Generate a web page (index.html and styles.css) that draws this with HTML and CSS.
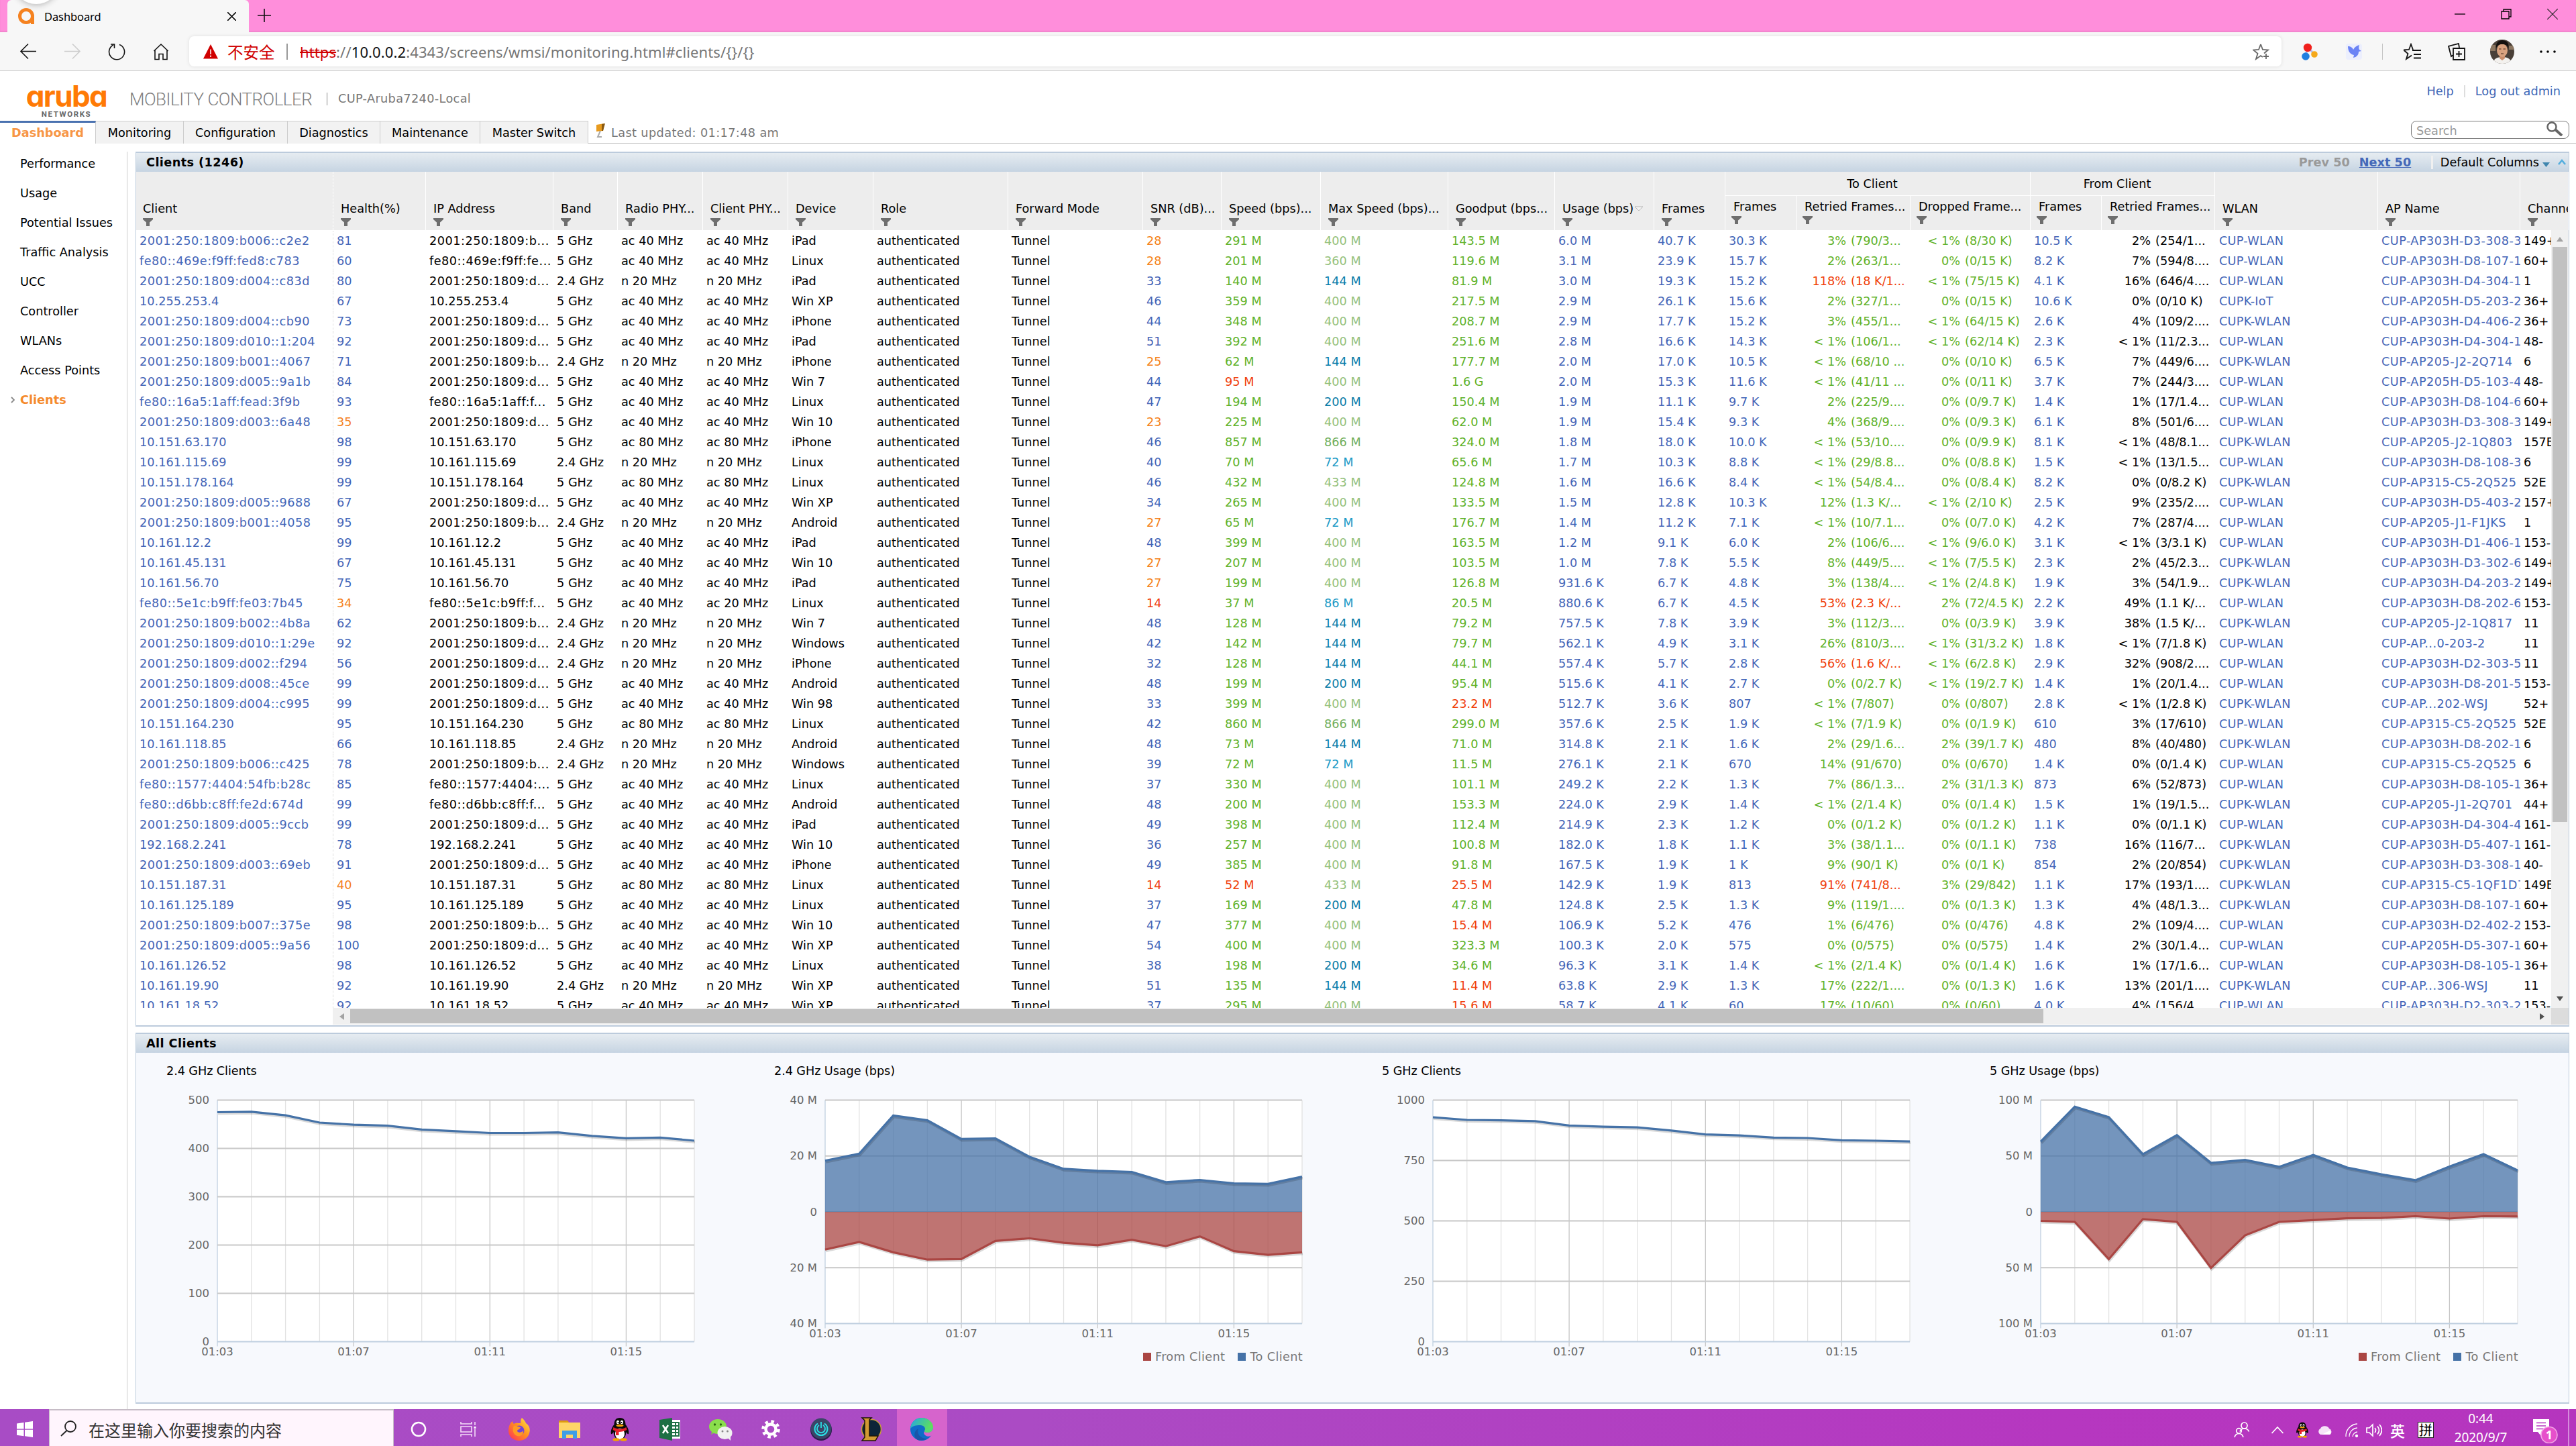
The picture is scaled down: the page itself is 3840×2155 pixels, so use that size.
FILE: index.html
```html
<!DOCTYPE html>
<html lang="en">
<head>
<meta charset="utf-8">
<title>Dashboard</title>
<link rel="stylesheet" href="styles.css">
</head>
<body>
<svg class="defs" width="0" height="0">
  <symbol id="funnel" viewBox="0 0 15 12"><path d="M0 0h15v2l-5 4.500v5.500h-5v-5.500l-5-4.500z" fill="#6e6e6e"/></symbol>
  <symbol id="penguin" viewBox="0 0 30 36">
    <path d="M15 1c6 0 8.500 4 8.500 10 4 5 5.500 10 4.500 14-1 1-2.500-1-3.500-3-.5 8-4 11-9.500 11s-9-3-9.500-11c-1 2-2.500 4-3.500 3-1-4 .5-9 4.500-14C6.500 5 9 1 15 1z" fill="#0b0b0b"/>
    <ellipse cx="15" cy="25" rx="7" ry="8" fill="#fff"/><ellipse cx="12" cy="7.500" rx="2" ry="2.800" fill="#fff"/><ellipse cx="18" cy="7.500" rx="2" ry="2.800" fill="#fff"/>
    <circle cx="12.500" cy="8" r="1" /><circle cx="17.500" cy="8" r="1"/>
    <ellipse cx="15" cy="12.500" rx="5.500" ry="1.800" fill="#f5a300"/>
    <path d="M5.500 15c6 3.500 13 3.500 19 0l1 4c-4 2-8 3-12 3v5H9v-6l-4.500-2z" fill="#e6212a"/>
    <ellipse cx="9.500" cy="33.500" rx="5" ry="2.200" fill="#f5a300"/><ellipse cx="20.500" cy="33.500" rx="5" ry="2.200" fill="#f5a300"/>
  </symbol>
</svg>
<div class="window">
  <div class="tabstrip">
    <div class="btab">
      <svg class="favicon" viewBox="0 0 24 24"><circle cx="12" cy="12" r="9.500" fill="none" stroke="#f58220" stroke-width="5"/><path d="M21.500 12v12" stroke="#f58220" stroke-width="5"/></svg>
      <span class="btab-title">Dashboard</span>
      <svg class="btab-x" viewBox="0 0 12 12"><path d="M0 0l12 12M12 0L0 12" stroke="#111" stroke-width="1.500"/></svg>
      <div class="bubble"></div>
    </div>
    <svg class="newtab" viewBox="0 0 20 20"><path d="M10 0v20M0 10h20" stroke="#111" stroke-width="1.600"/></svg>
    <div class="winctl">
      <svg viewBox="0 0 16 16"><path d="M0 8h16" stroke="#000" stroke-width="1.300"/></svg>
      <svg viewBox="0 0 16 16"><path d="M1 4h11v11h-11zM4 4v-3h11v11h-3" fill="none" stroke="#000" stroke-width="1.300"/></svg>
      <svg viewBox="0 0 16 16"><path d="M0 0l16 16M16 0l-16 16" stroke="#222" stroke-width="1.200"/></svg>
    </div>
  </div>
  <div class="toolbar">
    <div class="nav">
      <svg viewBox="0 0 26 26"><path d="M13 1.500L2 12.500l11 11M2 12.500h23" fill="none" stroke="#111" stroke-width="1.600"/></svg>
      <svg viewBox="0 0 26 26"><path d="M13 1.500l11 11-11 11M24 12.500H1" fill="none" stroke="#ccc" stroke-width="1.600"/></svg>
      <svg viewBox="0 0 26 26"><path d="M8 3A11.500 11.500 0 1 0 17 2.500M4 2h5.500v6" fill="none" stroke="#111" stroke-width="1.600"/></svg>
      <svg viewBox="0 0 26 26"><path d="M2.500 12L13 2l10.500 10M4 11v13.500h6v-8h6v8h6V11" fill="none" stroke="#111" stroke-width="1.600"/></svg>
    </div>
    <div class="urlbar">
      <svg class="warn" viewBox="0 0 22 22"><path d="M11 0l11 21.500H0z" fill="#d00000"/><path d="M11 7.500v7.500M11 16.500v2.500" stroke="#fff" stroke-width="1.500"/></svg>
      <span class="unsafe">不安全</span><i class="usep"></i>
      <span class="url"><s>https</s>://<b>10.0.0.2</b>:4343/screens/wmsi/monitoring.html#clients/{}/{}</span>
      <svg class="star" viewBox="0 0 26 26"><path d="M12 2l3 8 8 .5-6 5M12 2L9 10l-8 .5 6.500 5.200L5 24l7-5 3 2M20 16v8M16 20h8" fill="none" stroke="#666" stroke-width="1.800"/></svg>
    </div>
    <div class="ext">
      <svg viewBox="0 0 26 26"><path d="M10 6L7 19M10 6l9 10" stroke="#b7b9e8" stroke-width="3"/><circle cx="10" cy="7" r="6.200" fill="#f0201c"/><circle cx="7" cy="20" r="5.800" fill="#1f7fe0"/><circle cx="20" cy="17" r="4.800" fill="#f5a91b"/></svg>
      <svg viewBox="0 0 26 26"><rect x="1" y="1" width="24" height="24" rx="4" fill="#eceffd"/><path d="M4 5c4 0 7 2 8 5 2-4 5-6 9-7-1 3-1 5 0 7l3 2-4 1c0 5-3 8-8 9l1-4C7 17 4 12 4 5z" fill="#6b83f5"/></svg>
    </div>
    <i class="tsep"></i>
    <div class="ext ext2">
      <svg viewBox="0 0 26 26"><path d="M14 10L11 2 8 10l-8 .5L6.500 16 4 24l8-5.500M13 11h13M15 17h11M15 22.500h11" fill="none" stroke="#111" stroke-width="1.800"/></svg>
      <svg viewBox="0 0 26 26"><path d="M8 8h17v17H8zM8 18L5 20 1 5l15-4 1 6M16.500 12v9M12 16.500h9" fill="none" stroke="#111" stroke-width="1.800"/></svg>
      <svg class="avatar" viewBox="0 0 36 36"><defs><clipPath id="av"><circle cx="18" cy="18" r="18"/></clipPath></defs><g clip-path="url(#av)"><path d="M0 0h36v36H0z" fill="#4a4038"/><path d="M0 8h8v9H0zM28 9h8v6h-8z" fill="#8b7660"/><path d="M4 36c1-8 7-10 14-10s13 2 14 10z" fill="#f3f1ee"/><path d="M14 23h8v5l-4 3-4-3z" fill="#c98d6b"/><ellipse cx="18" cy="16" rx="8" ry="10" fill="#d9a27f"/><path d="M9 14C8 5 12 1 18 1s11 3 9 13c-1-5-3-7-9-7s-8 2-9 7z" fill="#15110f"/><path d="M13 14h3.500M19.500 14h3.500M16 21h4" stroke="#47291d" stroke-width="1.100"/></g></svg>
      <svg viewBox="0 0 26 26"><circle cx="3" cy="13" r="1.800"/><circle cx="13" cy="13" r="1.800"/><circle cx="23" cy="13" r="1.800"/></svg>
    </div>
  </div>

  <div class="page">
    <div class="masthead">
      <div class="logo"><span class="logo-name">aruba</span><span class="logo-sub">NETWORKS</span></div>
      <span class="product">MOBILITY CONTROLLER</span>
      <i class="msep"></i>
      <span class="host">CUP-Aruba7240-Local</span>
      <div class="account"><a>Help</a><i></i><a>Log out admin</a></div>
    </div>
    <div class="menu">
      <span class="mtab on">Dashboard</span><span class="mtab t2">Monitoring</span><span class="mtab t3">Configuration</span><span class="mtab t4">Diagnostics</span><span class="mtab t5">Maintenance</span><span class="mtab t6">Master Switch</span>
      <div class="menu-rest">
        <svg class="pin" viewBox="0 0 16 21"><path d="M2 2l12-2-2 11-10 1z" fill="#e89b1e"/><path d="M10 1l5-1-3 11-2 0z" fill="#8a5a12"/><path d="M8 11l-4 9h6" fill="none" stroke="#aaa" stroke-width="2"/></svg>
        <span class="updated">Last updated: 01:17:48 am</span>
        <div class="search"><span>Search</span><svg viewBox="0 0 24 22"><circle cx="8" cy="8" r="6.500" fill="none" stroke="#666" stroke-width="2.500"/><path d="M13 12l10 9" stroke="#666" stroke-width="4"/></svg></div>
      </div>
    </div>
    <div class="content">
      <div class="side">
        <span>Performance</span><span>Usage</span><span>Potential Issues</span><span>Traffic Analysis</span><span>UCC</span><span>Controller</span><span>WLANs</span><span>Access Points</span>
        <span class="cur"><svg viewBox="0 0 6 10"><path d="M1 1l4 4-4 4" fill="none" stroke="#888" stroke-width="1.800"/></svg>Clients</span>
      </div>
      <div class="main">
        <div class="panel clients">
          <div class="phead"><b>Clients (1246)</b>
            <div class="pager"><b class="prev">Prev 50</b><b class="next">Next 50</b><i></i><span>Default Columns</span>
              <svg class="tri" viewBox="0 0 11 7"><path d="M0 0h11L5.500 7z" fill="#3f86ae"/></svg>
              <svg class="up" viewBox="0 0 12 10"><path d="M1 8l5-6 5 6" fill="none" stroke="#55aede" stroke-width="2.600"/></svg></div>
          </div>
          <div class="thead cols" id="thead"></div>
          <div class="tbody"><div class="rows" id="rows"></div>
            <div class="vscroll"><svg viewBox="0 0 10 7"><path d="M0 7h10L5 0z" fill="#a3a3a3"/></svg><div class="vthumb"></div><svg class="down" viewBox="0 0 10 7"><path d="M0 0h10L5 7z" fill="#505050"/></svg></div>
          </div>
          <div class="hrow"><div class="hscroll"><svg viewBox="0 0 7 10"><path d="M7 0v10L0 5z" fill="#a3a3a3"/></svg><div class="hthumb"></div><svg class="right" viewBox="0 0 7 10"><path d="M0 0v10l7-5z" fill="#505050"/></svg></div><div class="corner"></div></div>
        </div>
        <div class="panel all">
          <div class="phead"><b>All Clients</b></div>
          <div class="charts" id="charts"></div>
        </div>
      </div>
    </div>
  </div>

  <div class="taskbar">
    <div class="start"><svg viewBox="0 0 24 24"><path d="M0 3.500l10.500-1.500v9.500H0zM12 1.700L24 0v11.500H12zM0 12.700h10.500v9.500L0 20.700zM12 12.700h12V24l-12-1.700z" fill="#fff"/></svg></div>
    <div class="tsearch"><svg viewBox="0 0 26 24"><circle cx="16" cy="9" r="8" fill="none" stroke="#222" stroke-width="1.800"/><path d="M10.500 15L2 23" stroke="#222" stroke-width="1.800"/></svg><span>在这里输入你要搜索的内容</span></div>
    <div class="apps">
      <div><svg viewBox="0 0 36 36"><circle cx="18" cy="18" r="10" fill="none" stroke="#fff" stroke-width="2.600"/></svg></div>
      <div><svg viewBox="0 0 36 36"><path d="M6 7v3h16V7M6 29v-3h16v3M6 14h16v8H6zM27 7v5M27 18v11" fill="none" stroke="#f3dcf7" stroke-width="1.600"/><path d="M25.500 14h3v3h-3z" fill="#fff"/></svg></div>
      <div><svg viewBox="0 0 36 36"><defs><linearGradient id="ff" x1="1" y1="0" x2="0" y2="1"><stop offset="0" stop-color="#fff04a"/><stop offset=".45" stop-color="#ff9220"/><stop offset="1" stop-color="#ff2d5a"/></linearGradient></defs><path d="M22 1c3 3 5 5 6 8 5 3 7 9 5 15-2 7-8 11-15 11C9 35 2 29 2 20c0-6 2-11 6-14 0 2 1 3 2 4 3-2 7-1 10-1 0-3 0-6 2-8z" fill="url(#ff)"/><circle cx="18" cy="20" r="7.500" fill="#7246d8"/><path d="M10 13c4-1 6 2 10 2-1 4-5 3-5 6 2 3 7 2 9-1 1 7-5 9-9 8-6-2-8-9-5-15z" fill="#ff9a24"/></svg></div>
      <div><svg viewBox="0 0 36 36"><path d="M2 5h13l3 4H2z" fill="#dd9b10"/><path d="M2 8h32v23H2z" fill="#ffd566"/><path d="M7 20h22v12h-6v-6H13v6H7z" fill="#3f9ee6"/></svg></div>
      <div><svg viewBox="0 0 30 36"><use href="#penguin"/></svg></div>
      <div><svg viewBox="0 0 36 36"><path d="M16 4h17v28H16z" fill="#fff"/><path d="M20 8h11v20H20M20 13h11M20 18h11M20 23h11M26 8v20" fill="none" stroke="#1d7044" stroke-width="2"/><path d="M2 4l19-3v34L2 31z" fill="#1d7044"/><path d="M7 12l8 12M15 12L7 24" stroke="#fff" stroke-width="2.600"/></svg></div>
      <div><svg viewBox="0 0 36 36"><path d="M6 19l-2 7 6-4z" fill="#7fd63e"/><ellipse cx="14" cy="14" rx="13" ry="11" fill="#8ade4c"/><circle cx="9.500" cy="11" r="1.700" fill="#2c6a12"/><circle cx="18.500" cy="11" r="1.700" fill="#2c6a12"/><ellipse cx="24.500" cy="23.500" rx="11" ry="9.500" fill="#f1f1f1"/><path d="M28 30l5 5v-7z" fill="#f1f1f1"/><circle cx="21" cy="21" r="1.500" fill="#888"/><circle cx="28.500" cy="21" r="1.500" fill="#888"/></svg></div>
      <div><svg viewBox="0 0 36 36"><circle cx="18" cy="18" r="7.500" fill="none" stroke="#fff" stroke-width="4.500"/><circle cx="18" cy="18" r="11.500" fill="none" stroke="#fff" stroke-width="4.500" stroke-dasharray="4.500 4.531"/></svg></div>
      <div><svg viewBox="0 0 36 36"><circle cx="18" cy="19" r="16" fill="#2a1c4b"/><circle cx="18" cy="17" r="15.500" fill="#3a4668"/><path d="M13 9.500a9.500 9.500 0 1 0 10 0" fill="none" stroke="#2ae0e6" stroke-width="2"/><path d="M15 12a6 6 0 1 0 6 0M18 7v9" fill="none" stroke="#2ae0e6" stroke-width="1.800"/></svg></div>
      <div><svg viewBox="0 0 36 36"><circle cx="19" cy="18" r="14.500" fill="#0d2438" stroke="#c89b3c" stroke-width="1.600"/><path d="M5 1h14l-3 3v24h13l-4 7H5l4-5V5z" fill="#d19a33" stroke="#1e1408" stroke-width="1.500"/></svg></div>
      <div class="active"><svg viewBox="0 0 36 36"><defs><linearGradient id="eg" x1="0" y1="0" x2="1" y2=".4"><stop offset="0" stop-color="#22a6e8"/><stop offset="1" stop-color="#5fe05a"/></linearGradient></defs><circle cx="18" cy="18" r="17" fill="#0f6cc8"/><path d="M1 17C2 7 9 1 18 1c10 0 17 7 17 14 0 5-4 8-8 8-3 0-5-1-5-2 3-5-1-9-6-9C9 12 4 13 1 17z" fill="url(#eg)"/><path d="M35 15c0 5-4 8-8 8-3 0-5-1-5-2l-1 3c2 5 8 6 12 3l3 3V15z" fill="#d664cc"/><path d="M35 15c0 5-4 8-8 8-3 0-5-1-5-2 1-4 13-6 13-6z" fill="#58d874"/><path d="M13 17c-3 7 2 15 13 15-5 3-11 3-14 2C6 31 5 21 13 17z" fill="#1a55a8"/></svg></div>
    </div>
    <div class="tray">
      <div class="c1"><svg viewBox="0 0 24 24"><circle cx="15.500" cy="5.500" r="4.500"/><path d="M9 14.500c1-3 3-4.500 6.500-4.500s6 2 7 4.500"/><circle cx="7.500" cy="13.500" r="3.800"/><path d="M1 23c1-4 3-5.500 6.500-5.500S13 19 14 23"/></svg></div>
      <div class="c2"><svg viewBox="0 0 24 24"><path d="M3.500 17l8.500-9 8.500 9"/></svg></div>
      <div class="c3"><svg viewBox="0 0 30 36" class="solid"><use href="#penguin"/></svg></div>
      <div class="c4"><svg viewBox="0 0 24 24" class="solid"><path d="M5 19a5 5 0 0 1 0-9 7 6 0 0 1 13 0 5 5 0 0 1 1 9z" fill="#f6e3f8"/><path d="M7 19l12-6a4 4 0 0 1 0 6z" fill="#fff"/></svg></div>
      <div class="c5"><svg viewBox="0 0 24 24"><path d="M4 22A18 18 0 0 1 21 3M9 22A13 13 0 0 1 21 9M14 22a8 8 0 0 1 7-7" stroke-width="1.300"/><circle cx="20" cy="21" r="1.300" fill="#fff"/></svg></div>
      <div class="c6"><svg viewBox="0 0 24 24"><path d="M1 9v7h4l5 5V4L5 9zM13 9q3 3.500 0 7M17 6.500q5 6 0 12M20 4q7 8 0 17"/></svg></div>
      <div class="c7">英</div>
      <div class="c8"><span>拼</span></div>
      <div class="clock"><span>0:44</span><span>2020/9/7</span></div>
      <div class="note"><svg viewBox="0 0 44 38"><path d="M2 2h24v19H14v6l-5-6H2z" fill="#fff"/><path d="M7 7.500h14M7 12h14M7 16.500h14" stroke="#b637c0" stroke-width="1.500"/><circle cx="26" cy="25.500" r="12" fill="#e750cb" stroke="#f3a4e6"/></svg><span>1</span></div>
    </div>
  </div>
</div>
<script src="app.js"></script>
</body>
</html>
```
FILE: styles.css
```css
* { box-sizing: border-box; }
body { margin: 0; width: 3840px; height: 2155px; overflow: hidden; background: #fff; color: #000; font-family: "DejaVu Sans", sans-serif; font-size: 17.7px; white-space: nowrap; }
svg { display: block; flex: none; }
.defs { position: absolute; }
.window { display: grid; grid-template-rows: 48px 58px 1994px 55px; height: 2155px; }

/* browser chrome */
.tabstrip { background: #ff8edb; display: flex; align-items: flex-end; font-family: "Noto Sans", sans-serif; box-shadow: inset 0 -2px 2px #f184cd; }
.btab { position: relative; margin-left: 11px; width: 360px; height: 48px; background: #f7f7f7; border-radius: 6px 6px 0 0; display: flex; align-items: center; padding-left: 16px; overflow: hidden; }
.favicon { width: 24px; height: 24px; }
.btab-title { margin-left: 15px; font-size: 16.500px; letter-spacing: -0.100px; width: 273px; }
.btab-x { width: 13px; height: 13px; }
.bubble { position: absolute; left: 9px; top: -60px; width: 68px; height: 66px; border-radius: 50%; background: #fff; box-shadow: 0 2px 8px #bbb; }
.newtab { width: 20px; height: 20px; margin: 0 0 15px 13px; }
.winctl { margin-left: auto; display: flex; gap: 53px; padding-right: 27px; margin-bottom: 19px; }
.winctl svg { width: 16px; height: 16px; }
.toolbar { background: #f7f7f7; border-bottom: 1px solid #c9c9c9; display: flex; align-items: center; font-family: "Noto Sans", "Noto Sans CJK SC", sans-serif; }
.nav { display: flex; gap: 40px; padding-left: 29px; width: 282px; }
.nav svg { width: 26px; height: 26px; }
.urlbar { width: 3119px; height: 45px; background: #fff; border-radius: 7px; box-shadow: 0 0 5px #ddd; display: flex; align-items: center; padding: 0 17px 0 21px; font-size: 22px; }
.warn { width: 22px; height: 22px; }
.unsafe { color: #d00000; font-size: 23.500px; margin-left: 14px; width: 73px; font-family: "Noto Sans CJK SC", sans-serif; }
.usep { width: 2px; height: 24px; background: #999; margin: 0 18px 0 15px; }
.url { color: #767676; letter-spacing: 0.110px; }
.url s { color: #d00000; }
.url b { font-weight: 400; color: #111; }
.star { width: 26px; height: 26px; margin-left: auto; }
.ext { display: flex; gap: 40px; padding-left: 29px; }
.ext svg { width: 26px; height: 26px; }
.tsep { width: 1px; height: 24px; background: #c4c4c4; margin-left: 29px; }
.ext2 { align-items: center; padding-left: 31px; }
.ext2 .avatar { width: 36px; height: 36px; margin: 0 -2px 0 -3px; }
.ext2 svg:last-child { margin-left: -1px; }

/* masthead */
.page { display: flex; flex-direction: column; }
.masthead { height: 74px; display: flex; align-items: center; padding: 9px 23px 0 0; }
.logo { width: 122px; margin-left: 38px; display: flex; flex-direction: column; align-items: center; }
.logo-name { font: 700 44px/40px Inter, sans-serif; font-feature-settings: "cv11"; color: #ff7a05; letter-spacing: -1.600px; margin-top: 3px; }
.logo-sub { font: 700 11.500px/12px Roboto, sans-serif; color: #666; letter-spacing: 1.600px; margin-top: 1px; }
.product { margin-left: 33px; width: 294px; font: 300 26px/30px Roboto, sans-serif; color: #808080; letter-spacing: -0.500px; }
.msep { width: 1px; height: 19px; background: #888; }
.host { margin-left: 16px; color: #777; margin-top: -2px; letter-spacing: 0.350px; }
.account { margin-left: auto; display: flex; color: #4069b8; margin-top: -23px; align-items: center; }
.account i { width: 2px; height: 18px; background: #ddd; margin: 0 15px; }

/* primary tabs */
.menu { display: flex; height: 34px; }
.mtab { background: #f2f2f2; border-top: 1px solid #ccc; border-right: 1px solid #ccc; display: flex; align-items: center; justify-content: center; width: 131px; padding-top: 1px; }
.mtab.on { width: 143px; background: #fff; border-top: 3px solid #4a72b0; color: #f79646; font-weight: 700; padding: 0 0 1px; }
.t3 { width: 155px; } .t4 { width: 138px; } .t5 { width: 149px; } .t6 { width: 161px; }
.menu-rest { flex: 1; border-bottom: 1px solid #c4c4c4; display: flex; align-items: center; color: #777; padding: 2px 10px 0 10px; }
.updated { letter-spacing: 0.380px; }
.pin { width: 16px; height: 21px; margin: -6px 8px 0 0; }
.search { margin: -8px 0 0 auto; width: 236px; height: 27px; border: 1px solid #777; border-radius: 8px; display: flex; align-items: center; justify-content: space-between; padding: 2px 9px 0 7px; color: #999; }
.search svg { width: 24px; height: 22px; margin-top: -5px; }

/* body */
.content { display: flex; flex: 1; padding-top: 12px; }
.side { width: 190px; border-right: 1px solid #ccc; display: flex; flex-direction: column; }
.side span { height: 44px; padding-left: 30px; display: flex; align-items: center; margin: -4px 0 4px; }
.side .cur { color: #f58a2c; font-weight: 700; padding-left: 16px; }
.side .cur svg { width: 6px; height: 10px; margin-right: 8px; }
.main { padding-left: 12px; display: flex; flex-direction: column; gap: 9px; }
.panel { width: 3628px; border: 1px solid #bccbdc; border-top-width: 2px; border-bottom-width: 2px; }
.clients { height: 1304px; }
.phead { height: 28px; background: linear-gradient(#e6ecf1, #c6d4e2); display: flex; align-items: center; padding: 0 4px 0 15px; }
.phead > b { letter-spacing: 0.400px; }
.pager { margin-left: auto; display: flex; align-items: center; }
.pager .prev { color: #999; width: 90px; }
.pager .next { color: #4468b8; text-decoration: underline; width: 107px; }
.pager i { width: 3px; height: 20px; background: #f0f0f0; margin-right: 11px; }
.tri { width: 11px; height: 7px; margin: 6px 12px 0 5px; }
.up { width: 12px; height: 10px; }
.cols, .row { display: grid; grid-template-columns: 294px 138px 190px 96px 127px 127px 127px 201px 201px 117px 148px 190px 159px 148px 106px 106px 170px 179px 106px 169px 243px 212px 72px; }
.thead { height: 87px; background: #ededed; grid-template-rows: 35px 52px; overflow: hidden; }
.th { border-right: 1px solid #fff; padding-left: 11px; overflow: hidden; grid-row: 1 / 3; display: flex; flex-direction: column; justify-content: flex-end; gap: 3px; padding-bottom: 6px; line-height: 22px; }
.th:first-child { padding-left: 10px; border-right-style: dashed; }
.th svg { width: 15px; height: 12px; }
.th.sub { grid-row: 2; border-top: 1px solid #fff; padding-bottom: 9px; padding-left: 12px; }
.th.sub svg { margin-left: -3px; }
.th .lbl { display: flex; align-items: center; }
.th .lbl svg { width: 14px; height: 8px; margin-left: 1px; }
.group { grid-row: 1; border-right: 1px solid #fff; display: flex; align-items: center; justify-content: center; padding-right: 16px; }
.g-to { grid-column: 16 / 19; } .g-from { grid-column: 19 / 21; }
.tbody { height: 1159px; display: flex; }
.rows { width: 3600px; overflow: hidden; padding-top: 1px; }
.row { height: 30px; line-height: 30px; }
.row > span { padding-left: 5px; overflow: hidden; }
.row > span:first-child { border-right: 1px dotted #ddd; }
.v6 { letter-spacing: 0.500px; }
.row > .wlan { letter-spacing: 0.250px; padding-left: 6px; }
.ap { letter-spacing: 0.450px; }
.pct { display: inline-block; width: 69px; text-align: right; margin-right: 7px; }
.dropped .pct { width: 69px; } .fretried .pct { width: 68px; }
.blue { color: #4466b8; } .orange { color: #f58220; } .red { color: #f0400a; } .green { color: #60b229; }
.sage { color: #94c17c; } .moss { color: #70ae5b; } .teal { color: #087ca8; } .sky { color: #1c9ac6; }
.vscroll { width: 26px; background: #f0f0f0; display: flex; flex-direction: column; align-items: center; padding: 10px 0; }
.vscroll svg { width: 12px; height: 7px; }
.vthumb { width: 22px; height: 857px; margin-top: 8px; background: #c1c1c1; }
.vscroll .down { margin-top: auto; }
.hrow { display: flex; justify-content: flex-end; }
.hscroll { width: 3307px; height: 25px; background: #f0f0f0; display: flex; align-items: center; padding: 0 10px; }
.hscroll svg { width: 7px; height: 12px; }
.hthumb { width: 2524px; height: 21px; background: #c1c1c1; margin-left: 9px; }
.hscroll .right { margin-left: auto; }
.corner { width: 26px; height: 25px; background: #dcdcdc; }

/* charts */
.all { height: 553px; background: #f7f9fd; }
.charts { display: flex; padding: 14px 0 0 45px; overflow: hidden; }
.chart { flex: none; width: 906px; height: 480px; display: flex; flex-direction: column; }
.chart:last-child { width: 800px; }
.chart h4 { margin: 0; font-weight: 400; font-size: 17.700px; line-height: 26px; letter-spacing: -0.100px; }
.chart svg { width: 800px; font-size: 16.500px; fill: #666; margin-left: 1px; }
.legend { width: 788px; display: flex; justify-content: flex-end; align-items: center; color: #777; margin-top: 7px; line-height: 26px; letter-spacing: 0.350px; }
.legend i { width: 12px; height: 12px; margin: 0 6px 0 19px; }
.from { background: #aa4643; } .to { background: #4572a7; }

/* taskbar */
.taskbar { display: flex; background: linear-gradient(90deg, #a84cc5, #ab4bc4 40%, #b637c0 80%, #b535be); color: #fff; }
.start { width: 73px; display: flex; align-items: center; justify-content: center; }
.start svg { width: 24px; height: 24px; margin-top: 5px; }
.tsearch { width: 514px; background: #fff5fd; border: 1px solid #c6bcc6; border-width: 2px 1px 0; display: flex; align-items: center; padding: 5px 0 0 15px; color: #333; font: 24px/40px "Noto Sans CJK SC", sans-serif; }
.tsearch svg { width: 26px; height: 24px; margin-right: 17px; margin-top: -4px; }
.apps { display: flex; }
.apps div { width: 74.900px; display: flex; align-items: center; justify-content: center; padding-top: 4px; }
.apps svg { width: 36px; height: 36px; }
.apps .active { background: #d664cc; margin-left: 1px; }
.tray { margin-left: auto; width: 520px; display: flex; align-items: center; font-family: "Noto Sans", "Noto Sans CJK SC", sans-serif; }
.tray svg { width: 24px; height: 24px; fill: none; stroke: #fff; stroke-width: 1.700; }
.tray svg.solid { stroke: none; fill: #000; }
.tray > div { flex: none; display: flex; align-items: center; justify-content: center; padding-top: 6px; }
.tray > .c1 { width: 44px; } .c2 { width: 62px; } .c3 { width: 12px; } .c4 { width: 56px; } .c5 { width: 22px; } .c6 { width: 46px; }
.tray > .c7 { width: 24px; font: 500 22px/24px "Noto Sans CJK SC", sans-serif; } .c8 { width: 50px; margin-left: 5px; }
.c8 span { width: 24px; height: 24px; background: #fff; border: 1px solid #222; color: #000; font: 20px/22px "Noto Sans CJK SC", sans-serif; text-align: center; }
.tray .clock { width: 114px; flex-direction: column; font-size: 19px; line-height: 28px; padding: 0; letter-spacing: -0.100px; }
.tray .note { position: relative; width: 44px; padding-top: 8px; margin-left: 19px; }
.tray .note svg { width: 44px; height: 38px; stroke: none; }
.note span { position: absolute; left: 19px; top: 18px; width: 14px; text-align: center; font-size: 18px; line-height: 30px; font-weight: 700; }
.tray::after { content: ""; width: 2px; height: 55px; background: #d58cdc; margin-left: 10px; }
```
FILE: app.js
```js
// Columns of the clients table
const heads = ["Client", "Health(%)", "IP Address", "Band", "Radio PHY...", "Client PHY...", "Device", "Role", "Forward Mode", "SNR (dB)...", "Speed (bps)...", "Max Speed (bps)...", "Goodput (bps...", "Usage (bps)", "Frames", "Frames", "Retried Frames...", "Dropped Frame...", "Frames", "Retried Frames...", "WLAN", "AP Name", "Channel"];
const funnel = '<svg><use href="#funnel"/></svg>';
const sortMark = '<svg viewBox="0 0 14 8"><path d="M1 1h12L7 7z" fill="#f4f4f4" stroke="#b5b5b5"/></svg>';
document.getElementById("thead").innerHTML =
  heads.map((h, i) => `<div class="th${i > 14 && i < 20 ? " sub" : ""}" style="grid-column:${i + 1}"><span class="lbl">${h}${i === 13 ? sortMark : ""}</span>${funnel}</div>`).join("") +
  '<div class="group g-to">To Client</div><div class="group g-from">From Client</div>';

// client|health|radio|client phy|device|snr|speed|max|goodput|usage|frames|to frames|to retried|to dropped|from frames|from retried|wlan|ap|channel ("!" marks a critical value)
const data = `
2001:250:1809:b006::c2e2|81|ac 40|ac 40|iPad|28|291|400|143.5 M|6.0 M|40.7 K|30.3 K|3% (790/3...|< 1% (8/30 K)|10.5 K|2% (254/1...|CUP-WLAN|CUP-AP303H-D3-308-3|149+
fe80::469e:f9ff:fed8:c783|60|ac 40|ac 40|Linux|28|201|360|119.6 M|3.1 M|23.9 K|15.7 K|2% (263/1...|0% (0/15 K)|8.2 K|7% (594/8....|CUP-WLAN|CUP-AP303H-D8-107-1|60+
2001:250:1809:d004::c83d|80|n 20|n 20|iPad|33|140|144|81.9 M|3.0 M|19.3 K|15.2 K|118% (18 K/1...!|< 1% (75/15 K)|4.1 K|16% (646/4....|CUP-WLAN|CUP-AP303H-D4-304-1|1
10.255.253.4|67|ac 40|ac 40|Win XP|46|359|400|217.5 M|2.9 M|26.1 K|15.6 K|2% (327/1...|0% (0/15 K)|10.6 K|0% (0/10 K)|CUPK-IoT|CUP-AP205H-D5-203-2|36+
2001:250:1809:d004::cb90|73|ac 40|ac 40|iPhone|44|348|400|208.7 M|2.9 M|17.7 K|15.2 K|3% (455/1...|< 1% (64/15 K)|2.6 K|4% (109/2....|CUPK-WLAN|CUP-AP303H-D4-406-2|36+
2001:250:1809:d010::1:204|92|ac 40|ac 40|iPad|51|392|400|251.6 M|2.8 M|16.6 K|14.3 K|< 1% (106/1...|< 1% (62/14 K)|2.3 K|< 1% (11/2.3...|CUP-WLAN|CUP-AP303H-D4-304-1|48-
2001:250:1809:b001::4067|71|n 20|n 20|iPhone|25|62|144|177.7 M|2.0 M|17.0 K|10.5 K|< 1% (68/10 ...|0% (0/10 K)|6.5 K|7% (449/6....|CUPK-WLAN|CUP-AP205-J2-2Q714|6
2001:250:1809:d005::9a1b|84|ac 40|ac 40|Win 7|44|95!|400|1.6 G|2.0 M|15.3 K|11.6 K|< 1% (41/11 ...|0% (0/11 K)|3.7 K|7% (244/3....|CUP-WLAN|CUP-AP205H-D5-103-4|48-
fe80::16a5:1aff:fead:3f9b|93|ac 40|ac 40|Linux|47|194|200|150.4 M|1.9 M|11.1 K|9.7 K|2% (225/9....|0% (0/9.7 K)|1.4 K|1% (17/1.4...|CUP-WLAN|CUP-AP303H-D8-104-6|60+
2001:250:1809:d003::6a48|35|ac 40|ac 40|Win 10|23|225|400|62.0 M|1.9 M|15.4 K|9.3 K|4% (368/9....|0% (0/9.3 K)|6.1 K|8% (501/6....|CUP-WLAN|CUP-AP303H-D3-308-3|149+
10.151.63.170|98|ac 80|ac 80|iPhone|46|857|866|324.0 M|1.8 M|18.0 K|10.0 K|< 1% (53/10....|0% (0/9.9 K)|8.1 K|< 1% (48/8.1...|CUPK-WLAN|CUP-AP205-J2-1Q803|157E
10.161.115.69|99|n 20|n 20|Linux|40|70|72|65.6 M|1.7 M|10.3 K|8.8 K|< 1% (29/8.8...|0% (0/8.8 K)|1.5 K|< 1% (13/1.5...|CUP-WLAN|CUP-AP303H-D8-108-3|6
10.151.178.164|99|ac 80|ac 80|Linux|46|432|433|124.8 M|1.6 M|16.6 K|8.4 K|< 1% (54/8.4...|0% (0/8.4 K)|8.2 K|0% (0/8.2 K)|CUPK-WLAN|CUP-AP315-C5-2Q525|52E
2001:250:1809:d005::9688|67|ac 40|ac 40|Win XP|34|265|400|133.5 M|1.5 M|12.8 K|10.3 K|12% (1.3 K/...|< 1% (2/10 K)|2.5 K|9% (235/2....|CUP-WLAN|CUP-AP303H-D5-403-2|157+
2001:250:1809:b001::4058|95|n 20|n 20|Android|27|65|72|176.7 M|1.4 M|11.2 K|7.1 K|< 1% (10/7.1...|0% (0/7.0 K)|4.2 K|7% (287/4....|CUP-WLAN|CUP-AP205-J1-F1JKS|1
10.161.12.2|99|ac 40|ac 40|iPad|48|399|400|163.5 M|1.2 M|9.1 K|6.0 K|2% (106/6....|< 1% (9/6.0 K)|3.1 K|< 1% (3/3.1 K)|CUP-WLAN|CUP-AP303H-D1-406-1|153-
10.161.45.131|67|ac 40|ac 40|Win 10|27|207|400|103.5 M|1.0 M|7.8 K|5.5 K|8% (449/5....|< 1% (7/5.5 K)|2.3 K|2% (45/2.3...|CUPK-WLAN|CUP-AP303H-D3-302-6|149+
10.161.56.70|75|ac 40|ac 40|iPad|27|199|400|126.8 M|931.6 K|6.7 K|4.8 K|3% (138/4....|< 1% (2/4.8 K)|1.9 K|3% (54/1.9...|CUPK-WLAN|CUP-AP303H-D4-203-2|149+
fe80::5e1c:b9ff:fe03:7b45|34|ac 40|ac 20|Linux|14|37|86|20.5 M|880.6 K|6.7 K|4.5 K|53% (2.3 K/...!|2% (72/4.5 K)|2.2 K|49% (1.1 K/...|CUP-WLAN|CUP-AP303H-D8-202-6|153-
2001:250:1809:b002::4b8a|62|n 20|n 20|Win 7|48|128|144|79.2 M|757.5 K|7.8 K|3.9 K|3% (112/3....|0% (0/3.9 K)|3.9 K|38% (1.5 K/...|CUPK-WLAN|CUP-AP205-J2-1Q817|11
2001:250:1809:d010::1:29e|92|n 20|n 20|Windows|42|142|144|79.7 M|562.1 K|4.9 K|3.1 K|26% (810/3....|< 1% (31/3.2 K)|1.8 K|< 1% (7/1.8 K)|CUP-WLAN|CUP-AP...0-203-2|11
2001:250:1809:d002::f294|56|n 20|n 20|iPhone|32|128|144|44.1 M|557.4 K|5.7 K|2.8 K|56% (1.6 K/...!|< 1% (6/2.8 K)|2.9 K|32% (908/2....|CUP-WLAN|CUP-AP303H-D2-303-5|11
2001:250:1809:d008::45ce|99|ac 40|ac 40|Android|48|199|200|95.4 M|515.6 K|4.1 K|2.7 K|0% (0/2.7 K)|< 1% (19/2.7 K)|1.4 K|1% (20/1.4...|CUP-WLAN|CUP-AP303H-D8-201-5|153-
2001:250:1809:d004::c995|99|ac 40|ac 40|Win 98|33|399|400|23.2 M!|512.7 K|3.6 K|807|< 1% (7/807)|0% (0/807)|2.8 K|< 1% (1/2.8 K)|CUPK-WLAN|CUP-AP...202-WSJ|52+
10.151.164.230|95|ac 80|ac 80|Linux|42|860|866|299.0 M|357.6 K|2.5 K|1.9 K|< 1% (7/1.9 K)|0% (0/1.9 K)|610|3% (17/610)|CUP-WLAN|CUP-AP315-C5-2Q525|52E
10.161.118.85|66|n 20|n 20|Android|48|73|144|71.0 M|314.8 K|2.1 K|1.6 K|2% (29/1.6...|2% (39/1.7 K)|480|8% (40/480)|CUPK-WLAN|CUP-AP303H-D8-202-1|6
2001:250:1809:b006::c425|78|n 20|n 20|Windows|39|72|72|11.5 M|276.1 K|2.1 K|670|14% (91/670)|0% (0/670)|1.4 K|0% (0/1.4 K)|CUP-WLAN|CUP-AP315-C5-2Q525|6
fe80::1577:4404:54fb:b28c|85|ac 40|ac 40|Linux|37|330|400|101.1 M|249.2 K|2.2 K|1.3 K|7% (86/1.3...|2% (31/1.3 K)|873|6% (52/873)|CUP-WLAN|CUP-AP303H-D8-105-1|36+
fe80::d6bb:c8ff:fe2d:674d|99|ac 40|ac 40|Android|48|200|400|153.3 M|224.0 K|2.9 K|1.4 K|< 1% (2/1.4 K)|0% (0/1.4 K)|1.5 K|1% (19/1.5...|CUPK-WLAN|CUP-AP205-J1-2Q701|44+
2001:250:1809:d005::9ccb|99|ac 40|ac 40|iPad|49|398|400|112.4 M|214.9 K|2.3 K|1.2 K|0% (0/1.2 K)|0% (0/1.2 K)|1.1 K|0% (0/1.1 K)|CUP-WLAN|CUP-AP303H-D4-304-4|161-
192.168.2.241|78|ac 40|ac 40|Win 10|36|257|400|100.8 M|182.0 K|1.8 K|1.1 K|3% (38/1.1...|0% (0/1.1 K)|738|16% (116/7...|CUPK-WLAN|CUP-AP303H-D5-407-1|161-
2001:250:1809:d003::69eb|91|ac 40|ac 40|iPhone|49|385|400|91.8 M|167.5 K|1.9 K|1 K|9% (90/1 K)|0% (0/1 K)|854|2% (20/854)|CUPK-WLAN|CUP-AP303H-D3-308-1|40-
10.151.187.31|40|ac 80|ac 80|Linux|14|52!|433|25.5 M!|142.9 K|1.9 K|813|91% (741/8...!|3% (29/842)|1.1 K|17% (193/1....|CUPK-WLAN|CUP-AP315-C5-1QF1D7|149E
10.161.125.189|95|ac 40|ac 40|Linux|37|169|200|47.8 M|124.8 K|2.5 K|1.3 K|9% (119/1....|0% (0/1.3 K)|1.3 K|4% (48/1.3...|CUPK-WLAN|CUP-AP303H-D8-107-1|60+
2001:250:1809:b007::375e|98|ac 40|ac 40|Win 10|47|377|400|15.4 M!|106.9 K|5.2 K|476|1% (6/476)|0% (0/476)|4.8 K|2% (109/4....|CUP-WLAN|CUP-AP303H-D2-402-2|153-
2001:250:1809:d005::9a56|100|ac 40|ac 40|Win XP|54|400|400|323.3 M|100.3 K|2.0 K|575|0% (0/575)|0% (0/575)|1.4 K|2% (30/1.4...|CUP-WLAN|CUP-AP205H-D5-307-1|60+
10.161.126.52|98|ac 40|ac 40|Linux|38|198|200|34.6 M|96.3 K|3.1 K|1.4 K|< 1% (2/1.4 K)|0% (0/1.4 K)|1.6 K|1% (17/1.6...|CUP-WLAN|CUP-AP303H-D8-105-1|36+
10.161.19.90|92|n 20|n 20|Win XP|51|135|144|11.4 M!|63.8 K|2.9 K|1.3 K|17% (222/1....|0% (0/1.3 K)|1.6 K|13% (201/1....|CUPK-WLAN|CUP-AP...306-WSJ|11
10.161.18.52|92|ac 40|ac 40|Win XP|37|295|400|15.6 M!|58.7 K|4.1 K|60|17% (10/60)|0% (0/60)|4.0 K|4% (156/4....|CUP-WLAN|CUP-AP303H-D2-303-2|153-`.trim().split("\n");

const span = (cls, text) => `<span class="${cls}">${text.replace("<", "&lt;")}</span>`;
const ratio = (cls, text) => {
  const [, p, rest] = text.match(/^(.*?%) (.*)$/);
  return `<span class="${cls}"><span class="pct">${p.replace("<", "&lt;")}</span>${rest}</span>`;
};
const flag = (v, ok) => [v.endsWith("!") ? "red" : ok, v.replace("!", "")];
const shortIp = (c) => {
  if (c.startsWith("2001")) return c.slice(0, 15) + "...";
  if (!c.startsWith("fe80")) return c;
  return c.slice(0, c.includes("469e") ? 18 : c.includes("1577") ? 16 : 17) + "...";
};
document.getElementById("rows").innerHTML = data.map((line) => {
  const [c, h, r1, r2, dev, snr, sp, max, good, use, fr, tf, tr, td, ff, frr, wlan, ap, ch] = line.split("|");
  const v6 = c.includes(":") ? " v6" : "";
  const [sc, sv] = flag(sp, "green"), [gc, gv] = flag(good, "green"), [rc, rv] = flag(tr, "green");
  const mc = +max > 800 ? "moss" : +max > 300 ? "sage" : +max > 100 ? "teal" : "sky";
  return `<div class="row">${span("blue" + v6, c)}${span(+h <= 40 ? "orange" : "blue", h)}${span(v6, shortIp(c))}${span("", r1 === "n 20" ? "2.4 GHz" : "5 GHz")}${span("", r1 + " MHz")}${span("", r2 + " MHz")}${span("", dev)}${span("", "authenticated")}${span("", "Tunnel")}${span(+snr < 20 ? "red" : +snr < 30 ? "orange" : "blue", snr)}${span(sc, sv + " M")}${span(mc, max + " M")}${span(gc, gv)}${span("blue", use)}${span("blue", fr)}${span("blue", tf)}${ratio("retried " + rc, rv)}${ratio("dropped green", td)}${span("blue", ff)}${ratio("fretried", frr)}${span("blue wlan", wlan)}${span("blue ap", ap)}${span("", ch)}</div>`;
}).join("");

// Charts: each series holds one value per minute from 01:03 to 01:17
const charts = [
  { title: "2.4 GHz Clients", labels: ["500", "400", "300", "200", "100", "0"], max: 500,
    up: [475, 476, 468.5, 453.5, 449, 447, 439, 435.5, 432, 432, 433, 426, 421, 422.5, 416] },
  { title: "2.4 GHz Usage (bps)", labels: ["40 M", "20 M", "0", "20 M", "40 M"], max: 40,
    up: [18.3, 20.8, 34.5, 32.8, 26.1, 26.3, 19.7, 15.4, 14.7, 14.3, 10.6, 11.4, 10.2, 10, 12.6],
    down: [13.5, 10.8, 14.5, 17.1, 16.9, 10.4, 9.5, 11.1, 12, 10, 12.3, 8.8, 14.1, 15.4, 14.5] },
  { title: "5 GHz Clients", labels: ["1000", "750", "500", "250", "0"], max: 1000,
    up: [929, 918, 916, 913, 895, 890, 887, 874, 858, 854, 845, 843, 834, 832, 829] },
  { title: "5 GHz Usage (bps)", labels: ["100 M", "50 M", "0", "50 M", "100 M"], max: 100,
    up: [62.9, 94.2, 84.8, 51.6, 68.7, 43.8, 46.5, 40.3, 50.9, 39.6, 33.6, 28.3, 40.6, 51.6, 37.1],
    down: [8.1, 9, 42.4, 6.5, 9, 50.2, 21, 9, 7.4, 5.8, 5.5, 3.9, 6, 3.9, 4.1] },
];
const L = 75, W = 711, T = 30.5;
document.getElementById("charts").innerHTML = charts.map((c, n) => {
  const H = c.down ? 333 : 360, zero = c.down ? T + H / 2 : T + H, unit = (c.down ? H / 2 : H) / c.max;
  const x = (i) => (L + (W * i) / 14).toFixed(1);
  let g = `<rect x="${L}" y="${T}" width="${W}" height="${H}" fill="#fff"/>`;
  for (let i = 0; i <= 14; i++) g += `<path d="M${x(i)} ${T}v${H + (i % 4 ? 0 : 7)}" stroke="${i === 0 ? "#c0d0e0" : i % 4 ? "#e2e2e2" : "#c6c6c6"}" stroke-width="1.300"/>`;
  c.labels.forEach((t, i) => {
    const y = T + (H * i) / (c.labels.length - 1);
    g += `<path d="M${L} ${y}h${W}" stroke="${i === c.labels.length - 1 ? "#c0d0e0" : "#c8c8c8"}" stroke-width="2"/><text x="${L - 12}" y="${y + 5.5}" text-anchor="end">${t}</text>`;
  });
  const draw = (vals, sign, col) => {
    const pts = vals.map((v, i) => `${x(i)},${(zero - sign * v * unit).toFixed(1)}`).join(" ");
    if (c.down) g += `<polygon points="${L},${zero} ${pts} ${L + W},${zero}" fill="${col}" fill-opacity=".75"/>`;
    g += `<polyline points="${pts}" transform="translate(1 2)" fill="none" stroke="#000" stroke-opacity=".15" stroke-width="4"/><polyline points="${pts}" fill="none" stroke="${col}" stroke-width="3.200"/>`;
  };
  draw(c.up, 1, "#4572a7");
  if (c.down) draw(c.down, -1, "#aa4643");
  ["01:03", "01:07", "01:11", "01:15"].forEach((t, i) => { g += `<text x="${x(i * 4)}" y="${T + H + 20}" text-anchor="middle">${t}</text>`; });
  return `<div class="chart"><h4>${c.title}</h4><svg style="height:${H + 60}px">${g}</svg>${c.down ? '<div class="legend"><i class="from"></i>From Client<i class="to"></i>To Client</div>' : ""}</div>`;
}).join("");
```
